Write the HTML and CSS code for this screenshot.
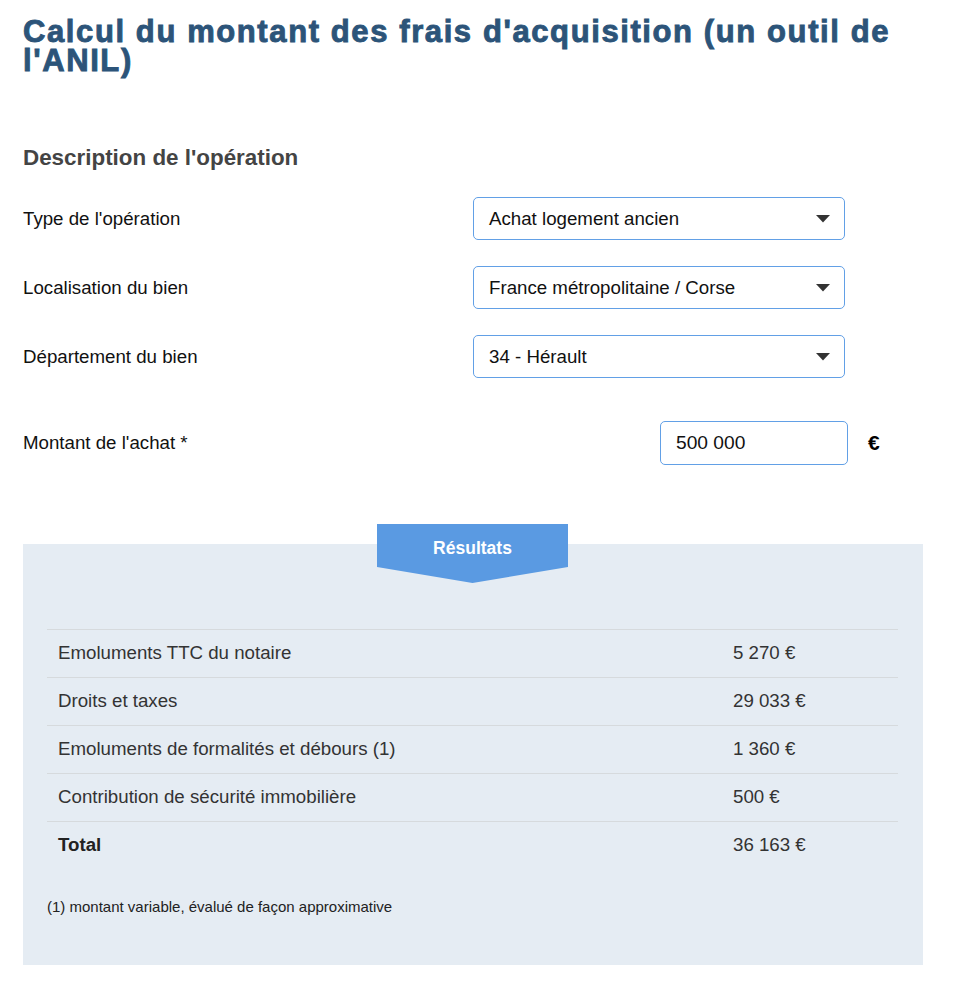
FILE: index.html
```html
<!DOCTYPE html>
<html lang="fr">
<head>
<meta charset="utf-8">
<title>Calcul du montant des frais d'acquisition</title>
<link rel="stylesheet" href="styles.css">
</head>
<body>
<main class="page">
  <h1 class="title">Calcul du montant des frais d'acquisition (un outil de l'ANIL)</h1>

  <h2 class="section-title">Description de l'opération</h2>

  <div class="form">
    <div class="form-row">
      <span class="label">Type de l'opération</span>
      <div class="select">
        <span>Achat logement ancien</span>
        <svg class="caret" width="14" height="8" viewBox="0 0 14 8"><path d="M0 0h14L7 7.5z" fill="#333"/></svg>
      </div>
    </div>
    <div class="form-row">
      <span class="label">Localisation du bien</span>
      <div class="select">
        <span>France métropolitaine / Corse</span>
        <svg class="caret" width="14" height="8" viewBox="0 0 14 8"><path d="M0 0h14L7 7.5z" fill="#333"/></svg>
      </div>
    </div>
    <div class="form-row">
      <span class="label">Département du bien</span>
      <div class="select">
        <span>34 - Hérault</span>
        <svg class="caret" width="14" height="8" viewBox="0 0 14 8"><path d="M0 0h14L7 7.5z" fill="#333"/></svg>
      </div>
    </div>
    <div class="form-row amount-row">
      <span class="label">Montant de l'achat *</span>
      <div class="amount">
        <div class="input">500 000</div>
        <span class="euro">€</span>
      </div>
    </div>
  </div>

  <section class="results">
    <div class="tab">Résultats</div>
    <div class="table">
      <div class="row"><span>Emoluments TTC du notaire</span><span>5 270 €</span></div>
      <div class="row"><span>Droits et taxes</span><span>29 033 €</span></div>
      <div class="row"><span>Emoluments de formalités et débours (1)</span><span>1 360 €</span></div>
      <div class="row"><span>Contribution de sécurité immobilière</span><span>500 €</span></div>
      <div class="row total"><span>Total</span><span>36 163 €</span></div>
    </div>
    <p class="note">(1) montant variable, évalué de façon approximative</p>
  </section>
</main>
</body>
</html>
```

FILE: styles.css
```css
html, body {
  margin: 0;
  padding: 0;
  background: #fff;
}

body {
  font-family: "Liberation Sans", Arial, sans-serif;
  color: #111;
  font-size: 18.7px;
}

.page {
  width: 900px;
  margin-left: 23px;
  padding-bottom: 37px;
}

.title {
  margin: 17px 0 0;
  font-size: 31px;
  line-height: 29px;
  font-weight: 700;
  letter-spacing: 1.6px;
  color: #2c5479;
  -webkit-text-stroke: 0.9px #2c5479;
}

.section-title {
  margin: 70px 0 0;
  font-size: 22.4px;
  line-height: 25px;
  font-weight: 700;
  color: #444;
}

.form {
  margin-top: 27px;
  display: flex;
  flex-direction: column;
  gap: 26px;
}

.form-row {
  display: grid;
  grid-template-columns: 450px 1fr;
  align-items: center;
  height: 43px;
}

.label {
  color: #111;
}

.select {
  box-sizing: border-box;
  width: 372px;
  height: 43px;
  border: 1px solid #62a0e6;
  border-radius: 5px;
  padding: 0 14px 0 15px;
  display: flex;
  align-items: center;
  justify-content: space-between;
  color: #111;
}

.caret {
  display: block;
  margin-top: 1px;
}

.amount-row {
  margin-top: 17px;
  grid-template-columns: 637px 1fr;
}

.amount {
  display: flex;
  align-items: center;
}

.input {
  box-sizing: border-box;
  width: 188px;
  height: 44px;
  border: 1px solid #62a0e6;
  border-radius: 5px;
  padding: 0 15px;
  display: flex;
  align-items: center;
  font-size: 19.2px;
}

.euro {
  margin-left: 20px;
  font-weight: 700;
  font-size: 21px;
  color: #000;
}

.results {
  display: flow-root;
  margin-top: 80px;
  background: #e5ecf3;
  padding: 0 25px 50px 24px;
}

.tab {
  width: 191px;
  height: 59px;
  margin: -20px auto 0;
  box-sizing: border-box;
  padding-top: 13px;
  text-align: center;
  background: #5a9ae2;
  color: #fff;
  font-weight: 700;
  font-size: 17.5px;
  line-height: 22px;
  clip-path: polygon(0 0, 100% 0, 100% 43px, 50% 59px, 0 43px);
}

.table {
  margin-top: 46px;
}

.row {
  display: grid;
  grid-template-columns: 1fr 165px;
  align-items: center;
  height: 47px;
  padding: 0 0 0 11px;
  border-top: 1px solid #d6dadd;
  color: #333;
}

.row span {
  margin-top: -2px;
}

.row.total {
  font-weight: 700;
  color: #222;
}

.row.total span:last-child {
  font-weight: 400;
  color: #333;
}

.note {
  margin: 29px 0 0;
  font-size: 15px;
  line-height: 17px;
  color: #222;
}
```
